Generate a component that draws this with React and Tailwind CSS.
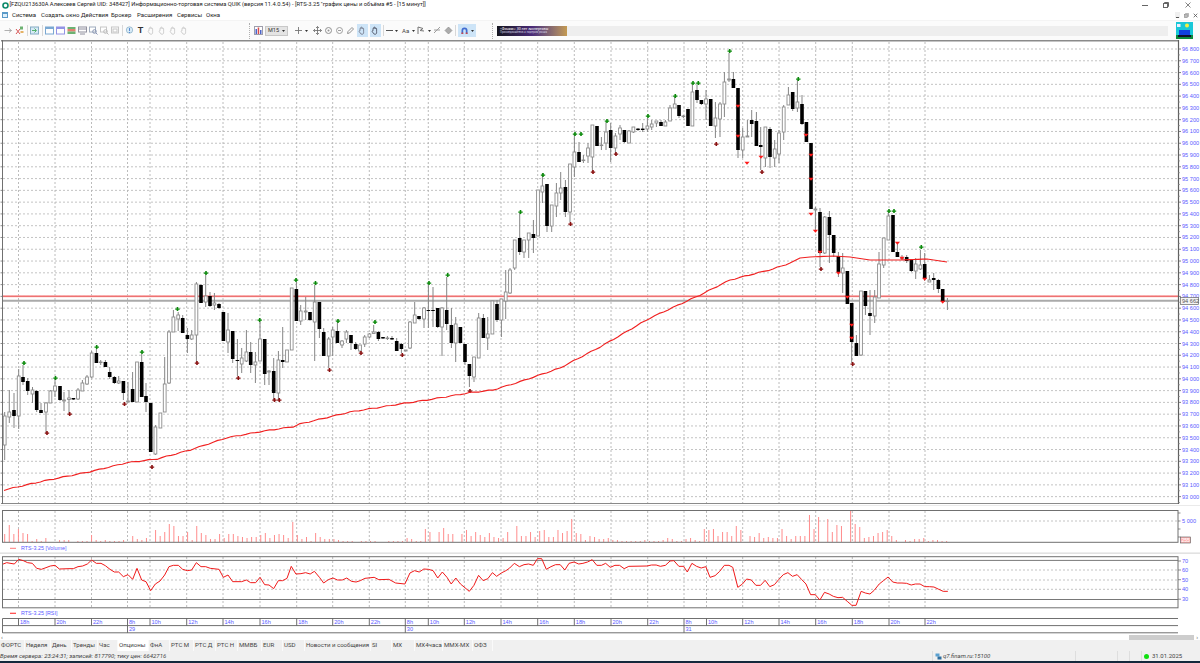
import React from "react";

// [x, top, bottom, high, low, black]
const candles = [
[4.7,416,445,412,460,0],[9.3,412,417,390,423,0],[14,410,416,393,428,1],[18.7,376,416,369,429,0],[23,377,382,365,385,1],[27.7,381,391,378,395,1],[32.5,390,394,387,403,0],[36.7,391,410,390,412,1],[41,410,413,403,413,1],[46,403,412,402,433,0],[50.4,391,403,390,403,0],[55,386,391,378,397,0],[60,386,400,386,401,1],[64,400,401,392,411,0],[69,398,399.5,390,413,0],[73.4,398,399.5,398,400,1],[78,390,399,388,400,0],[82.4,383,391,380,391,0],[87,377,384,375,385,0],[91.7,353,377,351,378,0],[96.4,353,363,349,363,1],[100.7,362,362.6,360,365,0],[105.4,362,367,360,367,1],[109.7,372,377,367,379,1],[114.4,377,383,376,384,1],[118.7,381,383,376,384,0],[123.4,381,393,381,400,1],[128,401,402,382,402,0],[132.6,389,402,372,402,1],[137,362,402,362,402,0],[141.7,362,397,354,397,1],[146,396,402,383,412,1],[150.7,403,452,403,452,1],[155.4,427,454,425,455,0],[160.4,413,428,413,428,0],[164.7,384,412,357,412,0],[169,332,383,330,384,0],[173.4,317,332,310,332,0],[178.2,315,319,312,331,0],[182.7,318,333,315,333,1],[187.4,335,339,328,353,1],[191.7,335,339,330,340,0],[196.4,284,335,282,363,0],[201,285,303,284,303,1],[205.7,296,302,275,307,0],[210,296,306,292,307,1],[214.4,303,305,293,310,0],[219,304,308,303,309,1],[223.4,312,341,312,341,1],[228,330,342,313,353,0],[232.7,331,359,331,363,1],[237.4,360,361,339,376,1],[241.7,358,364,348,373,0],[246.4,352,361,330,362,0],[250.7,352,365,342,373,1],[255.4,362,365,352,383,0],[260,339,361,322,361,0],[264.7,339,374,339,385,1],[269,371,372,370,385,0],[273.7,371,393,358,400,1],[278.4,360,393,351,400,0],[282.7,360,362,327,368,1],[287,350,362,350,362,0],[291.7,288,350,288,350,0],
[296.4,289,321,282,321,1],[300.7,311,321,305,325,0],[305.7,311,312,297,320,0],[310,312,320,312,321,1],[314.7,302,322,285,361,0],[319.4,302,329,302,338,1],[323.7,332,356,328,356,1],[328.7,339,356,337,368,0],[332.7,330,337,327,356,0],[337.4,331,343,322,343,1],[342,341,345,340,348,0],[346.4,332,339,330,343,0],[351,335,343,335,350,1],[355.7,344,349,342,350,1],[360,345,351,345,352,0],[364.7,337,344,335,347,0],[369.4,334,337,333,338,0],[373.7,332,333.5,325,334,0],[378.4,332,339,331,341,1],[383,337,338.5,337,339,1],[387.4,338,338.6,336,340,0],[392,338,339.5,336,340,1],[396.7,341,351,338,351,1],[401.4,344,349,343,353,1],[405.7,350,351,350,351,0],[410,322,348,321,349,0],[414.7,315,323,302,323,0],[419,316,319,316,320,1],[424,308,319,307,328,0],[428.4,310,311,285,328,1],[433,310,311,287,327,1],[437.7,308,327,308,328,1],[442,308,327,307,356,0],[446.7,310,324,277,330,1],[451.4,325,343,308,348,1],[455.7,324,343,317,362,0],[460.4,327,343,327,343,1],[465,344,362,344,365,1],[469.4,364,376,364,387,1],[474,357,377,357,382,0],[478.7,318,358,313,358,0],[483.4,318,338,314,338,1],[487.7,334,338,317,350,0],[492.4,301,334,301,334,0],[497,304,320,300,322,1],[501.4,299,320,299,337,0],[505.7,292,301,270,319,0],[510,270,293,268,294,0],
[514.7,240,268,240,270,0],[519.7,238,252,213,255,1],[524,240,252,240,258,0],[528.7,233,240,233,258,0],[533.4,234,238,220,253,1],[538,190,236,190,236,0],[542.4,186,192,173,203,0],[547,184,226,184,232,1],[551.7,205,226,205,232,0],[556.4,193,206,183,217,0],[560.7,188,193,172,200,0],[565.4,187,212,180,217,1],[570,164,212,164,222,0],[574.4,152,167,133,177,0],[579,152,162,142,162,1],[583.4,160,160.6,155,163,0],[588,148,156,143,163,0],[592.4,125,157,125,172,0],[597,126,146,126,146,1],[601.4,145,145.6,137,150,0],[606,132,143,122,150,0],[610.7,130,148,123,162,1],[615.4,136,148,133,155,0],[620,128,134,125,140,0],[624.4,130,142,130,143,1],[629,131,143,130,143,0],[633.4,127,132,127,133,0],[638,128.6,130,128,131,1],[642.7,128.6,130,123,132,1],[647.4,126,129,118,132,0],[651.7,124,127,120,130,0],[656.4,121,123,121,127,0],[661,122,126,120,126,1],[665.4,122,126,120,126,0],[670,108,121,105,121,0],[674.7,104,108,97,108,0],[679,105,116,105,118,1],[683.4,116,116.6,115,118,0],[688,109,126,109,126,1],[692.4,92,126,85,126,0],[697,90,100,85,103,1],[701.4,100,104,100,105,1],[706,99,104,90,120,0],[710.7,99,126,99,126,1],[715.4,118,126,102,138,0],[720,104,119,102,137,0],[724.4,82,104,72,117,0],[729,79,80,53,82,0],[733.4,79,88,72,88,1],[738,88,150,88,158,1],[742.7,137,150,128,158,0],[747.4,136,137,120,137,0],[751.7,120,124,110,137,1],[756.4,121,146,112,146,1],[760.7,145,147,127,170,1],[765.4,127,158,127,167,0],[770,129,157,127,168,1],[774.7,149,158,140,167,0],[779,133,154,130,163,0],[783.7,107,132,105,140,0],[788.4,95,105,87,105,0],[792.7,92,109,92,111,1],[797.4,102,108,80,112,0],[802,104,124,95,125,1],[806.4,122,142,122,142,1],[811,143,209,143,209,1],[815.4,209,210,207,230,0],[820,212,253,208,267,1],[824.7,217,253,216,254,0],[829.4,217,235,211,263,1],[833.7,235,253,235,257,1],[838.4,256,272,252,277,1],[842.7,268,273,253,293,0],[847.4,271,304,271,304,1],[851.7,303,342,303,363,1],[856.4,343,356,335,356,1],[861,291,355,291,356,0],[865.4,291,306,291,315,1],[870,313,316,290,335,1],[874.7,297,316,290,323,0],[879,264,298,252,298,0],[883.7,238,265,238,268,0],[888.4,216,240,212,240,0],[893,215,252,215,252,1],[897.4,252,257,243,257,1],[902,258,258.6,255,260,0],[906.7,257,261,255,263,1],[911.4,260,271,260,272,1],[915.7,264,271,258,279,0],[920.4,265,269,250,270,0],[924.7,264,279,253,281,1],[929.4,280,282,275,282,0],[933.7,278,280,273,290,1],[938.4,280,289,279,293,1],[942.7,289,302,289,303,1],[947.4,301,301.6,298,310,0],
];

const greens = [[24,363],[55.5,378],[96.7,347],[142,352],[177.5,309],[206,273],[259.7,320],[296,280],[315.5,283],[338,321],[375,322],[429,283],[447.7,275],[520.5,212],[543,175],[575,134],[581,134],[607,121],[648,116],[675.3,96],[693,83],[698.3,83],[729.7,51],[798.3,79],[889,211],[894,211],[921.3,247]];
const darks = [[47,433],[69.7,414],[124.5,404],[152,467],[197,363],[238.3,378],[274.5,400],[279.3,400],[329.5,370],[361,353],[402.3,355],[470,391],[570.5,224],[593,172],[616,154],[716.3,144],[762,172],[821,269],[852.7,364]];
const reds = [[738,106],[738,136],[747,163],[761,157],[806,135],[811,155],[811,179],[811,214],[815.4,231],[820,252],[838.4,273],[847.4,297],[851.7,325],[851.7,338],[897.4,243],[902,258],[924.7,279],[942.7,302]];

const maKnots = [[4,490],[45,480.7],[90,471.7],[127,462.7],[157,459],[190,450],[227,437.7],[260,431.7],[293,426.7],[300,424],[350,412],[400,404],[427,400],[470,392.7],[493,390],[520,381.7],[560,368],[600,347],[650,318],[700,295],[730,280],[773,269],[790,263],[800,258],[810,257],[833,256],[850,257],[870,260],[900,260],[927,259],[947,262]];
const maLine = [];
for (let i = 0; i < maKnots.length - 1; i++) {
  const [x0, y0] = maKnots[i];
  const [x1, y1] = maKnots[i + 1];
  const n = Math.max(1, Math.round((x1 - x0) / 4.57));
  for (let k = 0; k < n; k++) {
    const t = k / n;
    const x = x0 + (x1 - x0) * t;
    const j = x < 790 ? 0.45 * Math.sin(x * 0.37) : 0;
    maLine.push([x, y0 + (y1 - y0) * t + j]);
  }
}
maLine.push([947, 262]);

const vols = [8,17,8,13,9,8,1,3,1,4,0,0,2,2,2,0,1,1,1,7,2,1,2,1,1,1,2,0,6,3,2,4,0,12,6,10,18,16,6,6,10,2,16,9,7,3,3,8,4,8,8,6,5,4,5,5,7,9,4,7,8,7,4,
20,7,3,5,1,9,5,3,3,3,2,1,1,1,0,1,1,1,1,0,0,1,1,1,1,4,3,1,1,13,10,0,10,14,8,8,0,8,12,6,10,7,5,9,5,4,4,10,0,16,6,6,10,5,11,12,5,5,12,9,11,23,9,8,2,6,5,3,3,4,2,2,1,1,1,1,1,2,1,1,1,2,4,3,1,1,3,4,2,1,13,12,13,6,10,10,6,16,12,0,6,5,9,4,5,4,4,13,6,3,6,6,6,27,13,25,0,23,10,17,16,0,31,18,15,4,5,6,9,10,12,6,2,0,2,1,3,3,4,1,2,2,1,1];

const rsiA = [[7,193],[20,188],[43,192],[56,178],[70,182],[83,188],[97,190],[110,205],[124,208],[138,203],[151,198],[165,196],[178,207],[207,206],[220,206],[234,200],[248,198],[262,192],[275,180],[289,190],[303,190],[316,197],[330,208],[343,216],[356,216],[370,230],[384,224],[398,238],[411,205],[425,240],[438,245],[452,272],[466,252],[480,243],[494,225],[507,200],[520,196],[535,196],[548,208],[562,212],[575,210],[589,188],[603,200],[617,200],[631,205],[657,208],[670,232],[684,225],[698,245],[725,245],[739,240],[752,248],[767,248],[780,232],[794,254],[807,255],[821,266],[835,242],[848,242],[861,235]].map(([x,y])=>[x/3,500+y/3]);
const rsiB = [[3,175],[14,198],[26,197],[37,194],[48,198],[58,190],[70,208],[80,225],[91,215],[102,210],[113,216],[124,216],[135,210],[146,220],[157,222],[167,218],[178,211],[200,208],[211,215],[235,214],[251,225],[273,228],[285,195],[296,188],[307,192],[318,183],[329,184],[340,188],[351,210],[362,192],[373,208],[383,228],[394,210],[405,228],[426,250],[437,232],[448,202],[459,218],[470,212],[481,194],[491,205],[502,195],[513,188],[522,180],[533,166],[545,176],[556,170],[567,168],[578,172],[588,152],[598,152],[609,184],[620,176],[631,170],[642,170],[653,186],[663,166],[675,162],[686,168],[696,166],[707,162],[718,155],[729,172],[740,172],[750,166],[761,178],[772,172],[783,172],[794,182],[805,175],[848,174],[859,171],[870,171],[880,175],[892,172],[903,159],[912,158],[924,175],[935,175],[944,192],[955,166],[966,175],[977,180],[988,176],[998,208],[1010,203],[1021,190],[1032,172],[1043,172],[1052,178],[1064,238],[1075,228],[1085,213],[1096,216],[1107,232],[1118,232],[1129,217],[1140,236],[1151,230],[1161,215],[1172,200],[1183,194],[1194,205],[1205,200],[1216,215],[1226,228],[1237,260],[1248,260],[1259,276],[1270,253],[1281,258],[1291,265],[1302,269],[1313,268],[1324,280],[1335,292],[1345,292],[1357,250],[1367,255],[1378,258],[1388,247],[1400,228],[1410,218],[1421,207],[1432,222],[1443,225],[1454,225],[1465,226],[1476,231],[1486,228],[1497,228],[1508,236],[1519,236],[1530,237],[1540,243],[1552,250],[1563,250]].map(([x,y])=>[290+x/2.376,508+y/3]);
const rsi = [...rsiA,...rsiB];

const gridX = [18.5,55,91.5,127.5,150,186.7,223,260,296.7,332.7,369.3,405.3,428.3,464.3,501,537.7,574.3,611,647.7,684,706.5,742.7,779,815.7,852.3,889,925];
const hours = ["18h","20h","22h","8h","10h","12h","14h","16h","18h","20h","22h","8h","10h","12h","14h","16h","18h","20h","22h","8h","10h","12h","14h","16h","18h","20h","22h"];
const prices = Array.from({length:39},(_,i)=>{const v=96800-i*100;return {y:49+i*11.78,t:`${Math.floor(v/1000)} ${String(v%1000).padStart(3,"0")}`};});

const AX = "#5a5aff";
const pts = (a)=>a.map(([x,y])=>`${x},${y}`).join(" ");

function VGrid({y1,y2}){
  return gridX.map((x)=><line key={x} x1={x} x2={x} y1={y1} y2={y2} stroke="#b4b4b4" strokeWidth="0.9" strokeDasharray="2 2"/>);
}
function HDot({y}){
  return <line x1="3" x2="1177" y1={y} y2={y} stroke="#bcbcbc" strokeWidth="0.9" strokeDasharray="2 2"/>;
}
function Frame({y1,y2}){
  return <rect x="2.5" y={y1} width="1175.5" height={y2-y1} fill="none" stroke="#707070" strokeWidth="1"/>;
}

function MainChart(){
  return (
    <svg className="block shrink-0" width="1200" height="466" viewBox="0 40 1200 466">
      {prices.map((p)=><HDot key={p.y} y={p.y}/>)}
      <VGrid y1={42} y2={503}/>
      <line x1="2" x2="1178" y1="296.3" y2="296.3" stroke="#ffb0b0" strokeWidth="2"/>
      <line x1="2" x2="1178" y1="296.3" y2="296.3" stroke="#e04040" strokeWidth="0.7"/>
      <line x1="2" x2="1178" y1="300.8" y2="300.8" stroke="#aaaaaa" strokeWidth="2"/>
      {candles.map((c,i)=>(
        <g key={i}>
          <line x1={c[0]} x2={c[0]} y1={c[3]} y2={c[4]} stroke="#858585" strokeWidth="1"/>
          {c[5]
            ? <rect x={c[0]-1.8} y={c[1]} width="3.6" height={c[2]-c[1]} fill="#000"/>
            : <rect x={c[0]-1.4} y={c[1]} width="2.8" height={c[2]-c[1]} fill="#fff" stroke="#8c8c8c" strokeWidth="0.9"/>}
        </g>
      ))}
      {greens.map(([x,y],i)=><path key={i} d={`M${x-2.2} ${y}h1.4v-1.4h1.6v1.4h1.4v1.4h-1.4v1.2h-1.6v-1.2h-1.4z`} transform="translate(0 -0.6)" fill="#0a8a0a"/>)}
      {darks.map(([x,y],i)=><path key={i} d={`M${x-2.2} ${y}h1.4v-1.4h1.6v1.4h1.4v1.4h-1.4v1.2h-1.6v-1.2h-1.4z`} transform="translate(0 -0.6)" fill="#8a1010"/>)}
      {reds.map(([x,y],i)=><path key={i} d={`M${x-2.6} ${y-1.2}h5.2l-2.6 3z`} fill="#ff1a1a"/>)}
      <polyline points={pts(maLine)} fill="none" stroke="#f02020" strokeWidth="1.15" strokeLinejoin="round"/>
      <line x1="1" x2="1178" y1="40.7" y2="40.7" stroke="#8a8a8a" strokeWidth="1.4"/>
      <line x1="1" x2="1178" y1="503.5" y2="503.5" stroke="#8a8a8a" strokeWidth="1"/>
      <line x1="2.5" x2="2.5" y1="40" y2="504" stroke="#707070" strokeWidth="1"/>
      <line x1="1178.5" x2="1178.5" y1="40" y2="504" stroke="#606060" strokeWidth="1.2"/>
      <line x1="0" x2="1200" y1="506" y2="506" stroke="#d6d6d6" strokeWidth="1.2"/>
      {prices.map((p)=>(
        <g key={p.y}>
          <line x1="0.5" x2="2.5" y1={p.y} y2={p.y} stroke="#707070" strokeWidth="0.8"/>
          <line x1="1178" x2="1181" y1={p.y} y2={p.y} stroke="#606060" strokeWidth="0.8"/>
          <line x1="1178" x2="1180" y1={p.y+5.9} y2={p.y+5.9} stroke="#808080" strokeWidth="0.7"/>
          <text x="1182" y={p.y+2} fontSize="5.6" fill={AX} fontFamily="'Liberation Sans',sans-serif">{p.t}</text>
        </g>
      ))}
      <rect x="1180.5" y="297.5" width="18" height="7" fill="#f4f4f4" stroke="#666" strokeWidth="0.7"/>
      <text x="1182" y="303" fontSize="5.6" fill="#555" fontFamily="'Liberation Sans',sans-serif">94 662</text>
    </svg>
  );
}

function VolumePane(){
  return (
    <svg className="block shrink-0" width="1200" height="47" viewBox="0 506 1200 47">
      <HDot y={521}/>
      <VGrid y1={511} y2={542}/>
      {vols.map((h,i)=>h>0?<line key={i} x1={4.7+i*4.5725} x2={4.7+i*4.5725} y1={542} y2={542-h} stroke="#ff8c8c" strokeWidth="1"/>:null)}
      <Frame y1={510.5} y2={542.3}/>
      {[513,521,529,537].map((y)=><line key={y} x1="1178" x2="1180.5" y1={y} y2={y} stroke="#606060" strokeWidth="0.7"/>)}
      <text x="1182" y="523" fontSize="5.6" fill={AX} fontFamily="'Liberation Sans',sans-serif">5 000</text>
      <rect x="1180.5" y="537" width="10" height="6" fill="#ffb4b4" stroke="#555" strokeWidth="0.6"/>
      <text x="1181.5" y="542" fontSize="5" fill="#fff" fontFamily="'Liberation Sans',sans-serif">255</text>
      <line x1="10" x2="16" y1="548.3" y2="548.3" stroke="#ff7a7a" strokeWidth="1"/>
      <text x="21" y="550" fontSize="5.4" fill={AX} fontFamily="'Liberation Sans',sans-serif">RTS-3.25 [Volume]</text>
      <line x1="0" x2="1200" y1="553" y2="553" stroke="#dcdcdc" strokeWidth="1.2"/>
    </svg>
  );
}

function RsiPane(){
  return (
    <svg className="block shrink-0" width="1200" height="65" viewBox="0 553 1200 65">
      <line x1="0" x2="1200" y1="553.5" y2="553.5" stroke="#e2e2e2" strokeWidth="1"/>
      {[570,580,589.3].map((y)=><HDot key={y} y={y}/>)}
      <VGrid y1={557} y2={608}/>
      <line x1="3" x2="1178" y1="560.4" y2="560.4" stroke="#787878" strokeWidth="1"/>
      <line x1="3" x2="1178" y1="599.5" y2="599.5" stroke="#787878" strokeWidth="1"/>
      <polyline points={pts(rsi)} fill="none" stroke="#f01a1a" strokeWidth="1" strokeLinejoin="round"/>
      <Frame y1={556.7} y2={607.8}/>
      {[["70",561],["60",570],["50",579.7],["40",589.3],["30",599.2]].map(([t,y])=>(
        <g key={t}>
          <line x1="1178" x2="1181" y1={y} y2={y} stroke="#606060" strokeWidth="0.7"/>
          <text x="1182" y={y+2} fontSize="5.6" fill={AX} fontFamily="'Liberation Sans',sans-serif">{t}</text>
        </g>
      ))}
      <line x1="10" x2="16" y1="613.3" y2="613.3" stroke="#ff4040" strokeWidth="1.2"/>
      <text x="21" y="615" fontSize="5.4" fill={AX} fontFamily="'Liberation Sans',sans-serif">RTS-3.25 [RSI]</text>
    </svg>
  );
}

function TimeAxis(){
  return (
    <svg className="block shrink-0" width="1200" height="16" viewBox="0 618 1200 16">
      <line x1="2.5" x2="1178" y1="618.5" y2="618.5" stroke="#707070" strokeWidth="1"/>
      <line x1="2.5" x2="1178" y1="625.6" y2="625.6" stroke="#707070" strokeWidth="1"/>
      <line x1="2.5" x2="1178" y1="632.8" y2="632.8" stroke="#707070" strokeWidth="1"/>
      <line x1="2.5" x2="2.5" y1="618.5" y2="633" stroke="#707070" strokeWidth="1"/>
      {gridX.map((x,i)=>(
        <g key={x}>
          <line x1={x} x2={x} y1="618.5" y2="625.6" stroke="#606060" strokeWidth="0.9"/>
          <text x={x+1.5} y="624.3" fontSize="5.6" fill={AX} fontFamily="'Liberation Sans',sans-serif">{hours[i]}</text>
        </g>
      ))}
      {[[127.5,"29"],[405.3,"30"],[684,"31"]].map(([x,t])=>(
        <g key={t}>
          <line x1={x} x2={x} y1="625.6" y2="632.8" stroke="#606060" strokeWidth="0.9"/>
          <text x={x+1.5} y="631.3" fontSize="5.6" fill={AX} fontFamily="'Liberation Sans',sans-serif">{t}</text>
        </g>
      ))}
    </svg>
  );
}

/* toolbar icons */
const Ic = ({children,w=9})=><svg width={w} height="9" viewBox="0 0 9 9" className="block shrink-0 opacity-80">{children}</svg>;
const Win = ({c="#5a94c8"})=>(<Ic><rect x="0.5" y="1" width="8" height="7" fill="#fff" stroke={c}/><rect x="0.5" y="1" width="8" height="2" fill={c}/></Ic>);
const Sep = ()=><div className="w-px h-[11px] bg-[#d8d8d8] shrink-0"/>;
const Drop = ()=><svg width="3" height="2" viewBox="0 0 3 2" className="block shrink-0"><path d="M0 0h3L1.5 2z" fill="#333"/></svg>;
const Hand = ({c="#b9b9b9"})=>(<Ic><path d="M2 4.5V2.6c0-.6.9-.6.9 0V1.4c0-.6.9-.6.9 0v.9c0-.6.9-.6.9 0v.5c0-.6.9-.6.9 0v3C5.9 7.5 5 8.3 4 8.3S2.6 7.6 2.2 7L1.2 5.5c-.3-.5.4-1 .8-.6z" fill="none" stroke={c} strokeWidth="0.8"/></Ic>);
const Grip = ()=><div className="w-[2px] h-[16px] shrink-0 border-l border-dotted border-[#b0b0b0]"/>;

function Toolbar(){
  return (
    <div className="h-[20px] shrink-0 bg-[#fbfbfb] flex items-center border-t border-[#f4f4f4] relative">
      <div className="flex items-center w-[249px] pl-[4px] gap-[2px]">
        <Ic><path d="M0.5 4.5h7M5 2.5l2.5 2-2.5 2" fill="none" stroke="#888" strokeWidth="0.8"/></Ic>
        <Ic><path d="M1 3l4 5M5 3L1 8" stroke="#d03030" strokeWidth="1"/><rect x="5" y="0.5" width="3" height="3" fill="#4aa050"/><rect x="5.5" y="5" width="3" height="2" fill="#e0a040"/></Ic>
        <div className="ml-[1px]"><Sep/></div>
        <Ic><rect x="0.5" y="1" width="8" height="7" fill="#cfe6f5" stroke="#6a9ab8"/><path d="M2 4.5h4M4.5 2.5l2 2-2 2" fill="none" stroke="#2aa04a" strokeWidth="1"/></Ic>
        <div className="ml-[1px]"><Sep/></div>
        <Win/><Win c="#7a7ae0"/>
        <Ic><rect x="0.5" y="1" width="8" height="2" fill="#4aa050"/><rect x="0.5" y="3" width="8" height="2.5" fill="#e06050"/><rect x="0.5" y="5.5" width="8" height="2.5" fill="#4aa050"/></Ic>
        <Ic><rect x="0.5" y="1" width="8" height="5" fill="#fff" stroke="#778"/><path d="M2 8h5M1 3h7" stroke="#778"/></Ic>
        <Ic><rect x="0.5" y="1" width="6" height="5" fill="#fff" stroke="#8a9ab0"/><circle cx="5.5" cy="5.5" r="1.8" fill="none" stroke="#6a7aa0"/><path d="M7 7l1.5 1.5" stroke="#6a7aa0"/></Ic>
        <Ic><rect x="0.5" y="1" width="6" height="5" fill="#fff" stroke="#bbb"/><circle cx="5.5" cy="5.5" r="1.8" fill="none" stroke="#aaa"/><path d="M7 7l1.5 1.5" stroke="#aaa"/></Ic>
        <Ic><rect x="0.5" y="1" width="7" height="6" fill="#fff" stroke="#bbb"/><rect x="2" y="3" width="4" height="3" fill="none" stroke="#bbb"/></Ic>
        <Sep/>
        <Ic><circle cx="4.5" cy="4" r="3.2" fill="#cfe6f5" stroke="#6a9ab8" strokeWidth="0.7"/><path d="M4.5 2v3M4.5 6v1" stroke="#3070c8"/></Ic>
        <span className="w-[9px] text-center font-bold text-[9px] leading-none text-[#333] font-['Liberation_Sans',sans-serif] shrink-0">T</span>
        <Hand/><Hand/><Hand/><Hand/>
      </div>
      <Grip/>
      <div className="flex items-center ml-[3px] gap-[2px] w-[238px]">
        <Ic><rect x="0.5" y="0.5" width="8" height="8" fill="#fff" stroke="#889"/><rect x="1.5" y="3" width="1.5" height="5" fill="#2040c0"/><rect x="3.7" y="1.5" width="1.5" height="6.5" fill="#d02020"/><rect x="6" y="4" width="1.5" height="4" fill="#2040c0"/></Ic>
        <div className="w-[23px] h-[10px] bg-[#e4e4e4] border border-[#c8c8c8] flex items-center justify-between px-[2px] text-[5.5px] leading-none text-[#333] shrink-0">M15<Drop/></div>
        <span className="w-[2px]"/>
        <Ic><path d="M4.5 1v7M1 4.5h7" stroke="#555" strokeWidth="0.9"/></Ic>
        <Drop/>
        <span className="w-[1px]"/>
        <Ic><path d="M4.5 0.5v8M0.5 4.5h8M3 2l1.5-1.5L6 2M3 7l1.5 1.5L6 7M2 3L.5 4.5 2 6M7 3l1.5 1.5L7 6" fill="none" stroke="#444" strokeWidth="0.8"/></Ic>
        <Ic><circle cx="4.5" cy="4.5" r="3" fill="none" stroke="#777"/><circle cx="4.5" cy="4.5" r="1" fill="#777"/></Ic>
        <Ic><circle cx="4.5" cy="4.5" r="3" fill="none" stroke="#888"/><path d="M3 4.5h3" stroke="#888"/></Ic>
        <Ic><path d="M1.5 7.5L2 5.5 6 1.5l1.5 1.5-4 4z" fill="none" stroke="#777"/></Ic>
        <div className="bg-[#cde4f7] px-[1px] h-[13px] flex items-center shrink-0"><Hand c="#556"/></div>
        <div className="bg-[#cde4f7] px-[1px] h-[13px] flex items-center shrink-0"><Hand c="#223"/></div>
        <Sep/>
        <span className="w-[7px] h-px bg-[#555] shrink-0"/>
        <Drop/>
        <span className="text-[6px] leading-none text-[#444] w-[8px] shrink-0 ml-[2px]">Aa</span>
        <Drop/>
        <Ic><path d="M1 8V1l5 1.5L3 4.5 7 5" fill="none" stroke="#555"/></Ic>
        <Drop/>
        <Ic><path d="M1 7l3-3 3-3M1 4h6" fill="none" stroke="#888"/></Ic>
        <Ic><path d="M1 4.5l3.5-3.5 3.5 3.5-3.5 3.5z" fill="#999" stroke="#666" strokeWidth="0.6"/></Ic>
        <Sep/>
        <div className="bg-[#cde4f7] w-[18px] h-[13px] flex items-center gap-[2px] pl-[2px] shrink-0">
          <Ic><path d="M1.5 8V4.5a3 3 0 0 1 6 0V8H5.8V4.5a1.3 1.3 0 0 0-2.6 0V8z" fill="#2050c8"/><rect x="1.5" y="6.5" width="1.7" height="1.5" fill="#d02020"/><rect x="5.8" y="6.5" width="1.7" height="1.5" fill="#d02020"/></Ic>
          <Drop/>
        </div>
      </div>
      <Grip/>
      <div className="ml-[3px] flex-1 flex items-center h-[10px]">
        <div className="w-[70px] h-[10px] bg-gradient-to-r from-[#15151f] via-[#4a2a78] to-[#c49a50] text-white flex flex-col justify-center pl-[3px] shrink-0 overflow-hidden">
          <span className="text-[3.6px] leading-[4px] whitespace-nowrap">«Финам»: 30 лет экспертизы</span>
          <span className="text-[2.8px] leading-[3px] whitespace-nowrap text-[#d0d0e0]">Присоединяйтесь к лидерам рынка</span>
        </div>
        <div className="w-[601px] h-[10px] bg-[#eeeeee] shrink-0"/>
      </div>
      <svg width="17" height="17" viewBox="0 0 17 17" className="block shrink-0 mr-[7px]">
        <rect width="17" height="17" fill="#19c8d8"/>
        <rect y="13" width="17" height="4" fill="#0c8a3a"/>
        <circle cx="11" cy="3.5" r="2" fill="#f4f040"/>
        <rect x="1" y="2" width="3.5" height="3" fill="#eef"/>
        <rect x="3" y="8" width="11" height="5" fill="#1040e0"/>
        <rect x="2" y="13" width="13" height="2" fill="#101030"/>
      </svg>
    </div>
  );
}

const tabs = [
  ["ФОРТС","w-[25px]"],["Неделя","w-[26px]"],["День","w-[21px]"],["Тренды","w-[26px]"],["Час","w-[20px]"],
  ["Опционы","w-[31px] bg-white"],["ФнА","w-[21px]"],["РТС М","w-[24px]"],["РТС Д","w-[22px]"],["РТС Н","w-[22px]"],
  ["ММВБ","w-[24px]"],["EUR","w-[21px]"],["USD","w-[22px]"],["Новости и сообщения","w-[66px]"],["SI","w-[21px]"],
  ["MX","w-[23px]"],["MX4часа","w-[28px]"],["ММХ-МХ","w-[30px]"],["ОФЗ","w-[20px]"],
];
const menu = [["Система","w-[29px]"],["Создать окно","w-[40px]"],["Действия","w-[30px]"],["Брокер","w-[26px]"],["Расширения","w-[40px]"],["Сервисы","w-[29px]"],["Окна","w-[20px]"]];

export default function App(){
  return (
    <div className="w-[1200px] h-[663px] bg-white overflow-hidden flex flex-col font-['Roboto','Noto_Sans',sans-serif] text-[#222]">
      <div className="h-[10px] shrink-0 flex items-center pl-[2px]">
        <svg width="7" height="7" viewBox="0 0 7 7" className="block shrink-0"><circle cx="3.5" cy="3.5" r="2.5" fill="#fff" stroke="#0e8a6a" strokeWidth="1.6"/></svg>
        <span className="ml-[0.5px] text-[5.75px] leading-none whitespace-nowrap">[FZQU213630A Алексеев Сергей UID: 348427] Информационно-торговая система QUIK (версия 11.4.0.54) - [RTS-3.25 "график цены и объёма #5 - [15 минут]]</span>
        <div className="ml-auto flex items-center text-[#555]">
          <span className="w-[6px] h-px bg-[#666] mr-[15px]"/>
          <svg width="6" height="6" viewBox="0 0 6 6" className="block mr-[16px]"><rect x="0.5" y="1.5" width="4" height="4" fill="none" stroke="#666"/><path d="M1.5 1.5V.5h4v4h-1" fill="none" stroke="#666"/></svg>
          <svg width="6" height="6" viewBox="0 0 6 6" className="block mr-[9px]"><path d="M0.5 0.5l5 5M5.5 0.5l-5 5" stroke="#666" strokeWidth="0.8"/></svg>
        </div>
      </div>
      <div className="h-[10px] shrink-0 flex items-center pl-[2px] text-[6px] leading-none">
        <svg width="6" height="6" viewBox="0 0 6 6" className="block shrink-0 mr-[4px]"><rect x="0.5" y="0.5" width="5" height="5" fill="#dff0fb" stroke="#5a9ac8"/><rect x="0.5" y="0.5" width="5" height="1.5" fill="#5a9ac8"/></svg>
        {menu.map(([t,c])=><span key={t} className={`${c} shrink-0 whitespace-nowrap`}>{t}</span>)}
        <div className="ml-auto flex items-center gap-[4px] mr-[2px]">
          <div className="w-[5px] h-[6px] bg-[#f0f0f0] flex items-end justify-center"><span className="w-[3px] h-px bg-[#555]"/></div>
          <svg width="5" height="5" viewBox="0 0 5 5" className="block"><rect x="0.5" y="1.5" width="3" height="3" fill="#bbb" stroke="#888" strokeWidth="0.6"/><path d="M1.5 1V.5h3v3H4" fill="none" stroke="#888" strokeWidth="0.6"/></svg>
          <svg width="5" height="5" viewBox="0 0 5 5" className="block"><path d="M0.7 0.7l3.6 3.6M4.3 0.7L0.7 4.3" stroke="#555" strokeWidth="0.8"/></svg>
        </div>
      </div>
      <Toolbar/>
      <MainChart/>
      <VolumePane/>
      <RsiPane/>
      <TimeAxis/>
      <div className="h-[6px] shrink-0 flex items-center text-[6px] leading-none text-[#555] pl-[1px]">
        <span>‹</span>
        <div className="ml-auto w-[65px] h-[5px] bg-[#cdcdcd] mr-[2px]"/>
        <span className="mr-[2px]">›</span>
      </div>
      <div className="h-[11px] shrink-0 bg-[#f0f0f0] flex items-stretch text-[6.1px] leading-none text-[#444]">
        {tabs.map(([t,c])=><span key={t} className={`${c} shrink-0 whitespace-nowrap flex items-center pl-[1px] border-r border-[#fafafa]`}>{t}</span>)}
      </div>
      <div className="h-[10px] shrink-0 bg-[#f0f0f0] flex items-center text-[6px] leading-none text-[#444]">
        <span className="w-[932px] shrink-0 whitespace-nowrap italic">Время сервера: 23:24:31; записей: 817790; тику цен: 6642716</span>
        <div className="w-[143px] h-full shrink-0 border-l border-[#dedede] flex items-center pl-[2px] gap-[1px]">
          <svg width="7" height="7" viewBox="0 0 7 7" className="block"><rect x="0.5" y="0.5" width="4" height="3" fill="#5aa0d0"/><rect x="2.5" y="3.5" width="4" height="3" fill="#2f6f9f"/></svg>
          <span className="italic">q7.finam.ru:15100</span>
        </div>
        <div className="w-[42px] h-full shrink-0 border-l border-[#dedede]"/>
        <div className="w-[12px] h-full shrink-0 border-l border-[#dedede]"/>
        <div className="w-[12px] h-full shrink-0 border-l border-[#dedede]"/>
        <div className="flex-1 h-full border-l border-[#dedede] flex items-center pl-[2px] gap-[3px]">
          <span className="w-[5px] h-[5px] rounded-full bg-[#10e010] shrink-0"/>
          <span className="whitespace-nowrap">31.01.2025</span>
        </div>
      </div>
      <div className="h-[2px] shrink-0 bg-[#14283c]"/>
    </div>
  );
}
